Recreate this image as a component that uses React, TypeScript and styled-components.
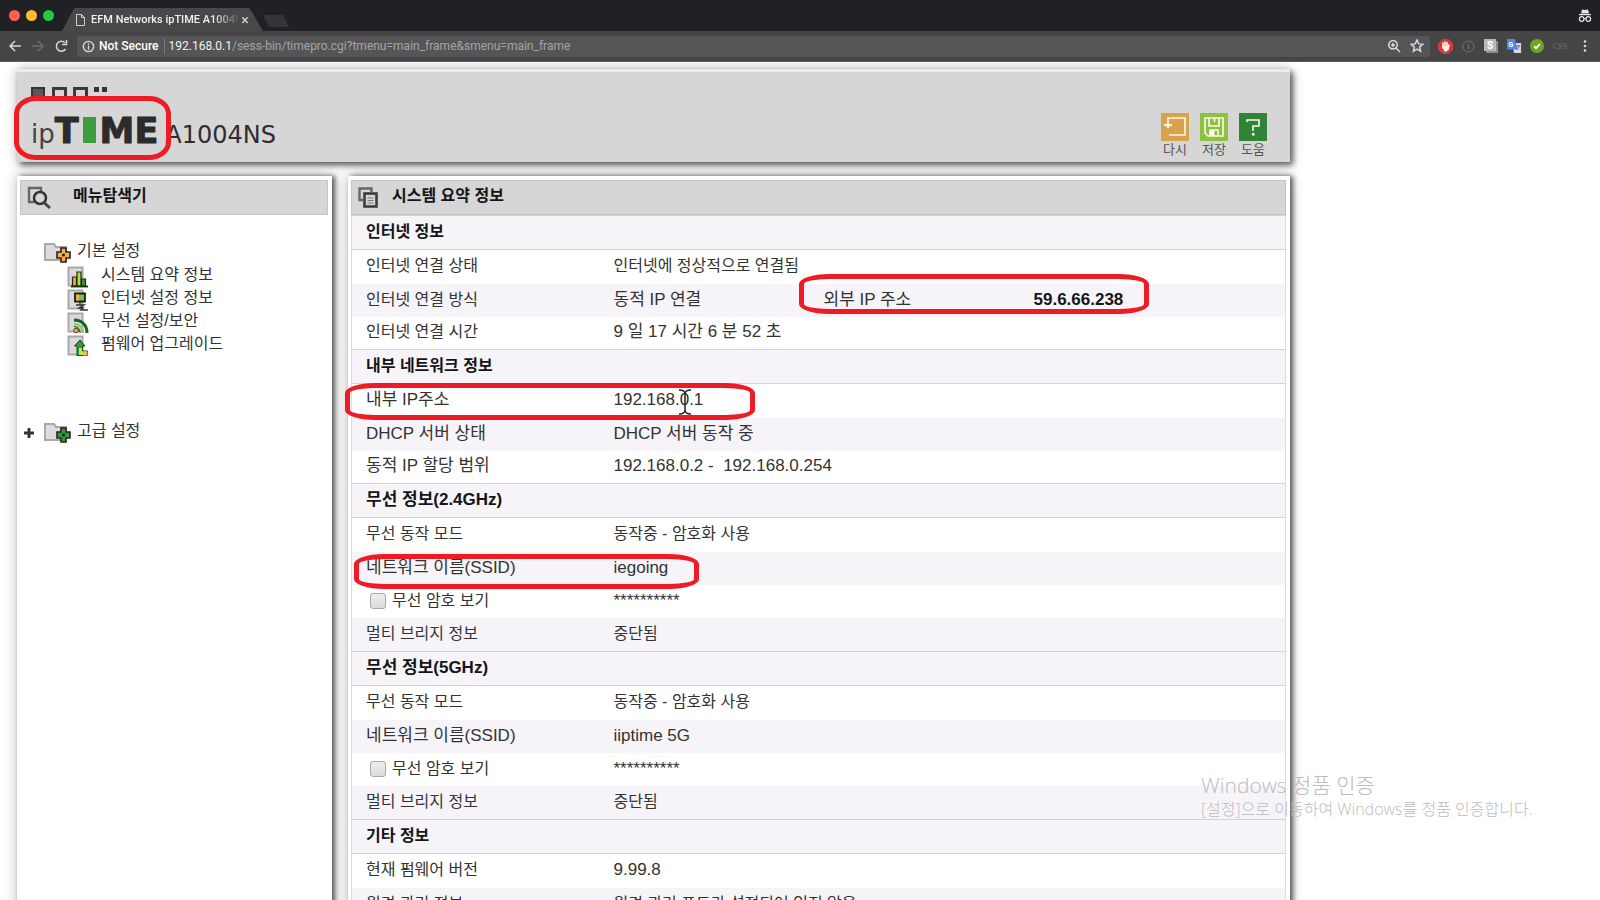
import React, { useState } from "react";
import styled, { createGlobalStyle } from "styled-components";

const GlobalStyle = createGlobalStyle`
  * { box-sizing: border-box; }
  body {
    margin: 0;
    background: #fff;
    color: #333;
    font-family: "Liberation Sans", "Noto Sans CJK KR", sans-serif;
    font-size: 16px;
  }
  button { border: 0; padding: 0; background: none; color: inherit; font: inherit; cursor: pointer; }
  a { color: inherit; text-decoration: none; }
  svg { display: block; flex: none; }
`;

/* ---------- browser window ---------- */

const Window = styled.div`
  height: 100vh;
  display: flex;
  flex-direction: column;
  overflow: hidden;
  position: relative;
`;

const TabStrip = styled.div`
  flex: none;
  height: 31px;
  display: flex;
  align-items: flex-end;
  padding: 0 8px 0 9px;
  background: #202125;
`;

const Lights = styled.div`
  align-self: center;
  display: flex;
  gap: 6px;
  margin-right: 8px;
`;

const Light = styled.button<{ $color: string }>`
  width: 11px;
  height: 11px;
  border-radius: 50%;
  background: ${(p) => p.$color};
`;

const Tab = styled.div`
  width: 201px;
  height: 23px;
  display: flex;
  align-items: center;
  padding: 0 13px 0 14px;
  background: #48484a;
  clip-path: polygon(0 100%, 10px 4px, 13px 0, 187px 0, 190px 4px, 100% 100%);
`;

const TabTitle = styled.span`
  flex: 1;
  min-width: 0;
  margin: 0 0 0 6px;
  overflow: hidden;
  white-space: nowrap;
  font: 500 11px/20px Roboto, sans-serif;
  color: #f0f0f0;
  mask-image: linear-gradient(to right, #000 82%, transparent);
`;

const CloseTab = styled.button`
  width: 10px;
  font: 14px/20px Roboto, sans-serif;
  color: #d6d6d6;
`;

const NewTab = styled.button`
  width: 26px;
  height: 12px;
  margin-bottom: 4px;
  background: #343437;
  clip-path: polygon(0 0, 20px 0, 100% 100%, 6px 100%);
`;

const Incognito = styled.div`
  margin: 0 0 8px auto;
`;

const Toolbar = styled.div`
  flex: none;
  height: 31px;
  display: flex;
  align-items: center;
  padding: 0 8px;
  background: #454447;
  border-bottom: 1px solid #5c5b5e;
  color: #d8d8d8;
`;

const NavButton = styled.button<{ $dim?: boolean }>`
  width: 14px;
  margin-right: 9px;
  color: ${(p) => (p.$dim ? "#6b6b6d" : "#d8d8d8")};
`;

const AddressBar = styled.div`
  flex: 1;
  height: 21px;
  display: flex;
  align-items: center;
  margin-right: 8px;
  padding: 0 6px 0 5px;
  border-radius: 2px;
  background: #555456;
`;

const Secure = styled.span`
  margin-left: 4px;
  padding-right: 5px;
  border-right: 1px solid #7b7b7d;
  font: 500 12px/16px Roboto, sans-serif;
  color: #fff;
`;

const Address = styled.input`
  width: 40px;
  flex: 1;
  padding: 0;
  border: 0;
  outline: 0;
  background: none;
  color: #eee;
  font: inherit;
`;

const UrlBox = styled.div`
  flex: 1;
  display: flex;
  align-items: center;
  margin-left: 4px;
  color: #a5a5a7;
  font: 12px/20px Roboto, sans-serif;
  b { font-weight: 400; color: #f2f2f2; }
`;

const BarIcons = styled.div`
  display: flex;
  align-items: center;
  gap: 9px;
`;

const Extensions = styled.div`
  display: flex;
  align-items: center;
  gap: 9px;
`;

/* ---------- router page ---------- */

const Page = styled.main`
  flex: 1;
  min-height: 0;
  overflow: hidden;
  padding: 7px 17px 0;
`;

const Shell = styled.div`
  position: relative;
  max-width: 1273px;
`;

const Banner = styled.header`
  height: 93px;
  display: flex;
  justify-content: space-between;
  padding: 15px 23px 0 14px;
  background: #d6d6d6;
  border-top: 3px solid #ececec;
  box-shadow: 3px 3px 6px rgba(0, 0, 0, 0.6), 0 0 12px rgba(0, 0, 0, 0.25);
`;

const Logo = styled.div`
  display: flex;
  flex-direction: column;
  gap: 13px;
`;

const Brand = styled.h1`
  height: 34px;
  display: flex;
  align-items: baseline;
  margin: 0;
  font: 26px/34px "DejaVu Sans", sans-serif;
  color: #444;
`;

const Heavy = styled.span`
  font-size: 35px;
  font-weight: 700;
  color: #2b2b2b;
  -webkit-text-stroke: 1px #2b2b2b;
`;

const GreenI = styled.span`
  align-self: flex-start;
  width: 13px;
  height: 26px;
  margin: 3px 4px 0;
  background: #3c9d3f;
  color: #3c9d3f;
  font: 700 20px/26px "DejaVu Sans", sans-serif;
  text-align: center;
`;

const Model = styled.span`
  margin-left: 7px;
  font-size: 24px;
  color: #2e2e2e;
`;

const Actions = styled.nav`
  display: flex;
  gap: 11px;
  padding-top: 26px;
`;

const Action = styled.button`
  width: 28px;
  display: flex;
  flex-direction: column;
  align-items: center;
  align-self: flex-start;
  gap: 1px;
  color: #555;
  font-size: 13px;
  line-height: 16px;
  white-space: nowrap;
`;

const Columns = styled.div`
  display: grid;
  grid-template-columns: 315px minmax(0, 1fr);
  gap: 16px;
  margin-top: 14px;
`;

const Panel = styled.section`
  position: relative;
  min-height: 760px;
  padding: 4px 4px 0 3px;
  background: #fff;
  box-shadow: 3px 0 5px rgba(0, 0, 0, 0.6), 0 0 14px rgba(0, 0, 0, 0.25);
`;

const PanelTitle = styled.h2<{ $gap: number }>`
  height: 35px;
  display: flex;
  align-items: center;
  gap: ${(p) => p.$gap}px;
  margin: 0;
  padding: 0 6px;
  background: #d6d6d6;
  border: 1px solid #c4c4c4;
  font-size: 16px;
  line-height: 24px;
  color: #151515;
  span { padding-bottom: 4px; }
`;

const Menu = styled.ul`
  list-style: none;
  margin: 0;
  padding: 26px 0 0;
`;

const MenuItem = styled.li<{ $level: number }>`
  height: ${(p) => (p.$level ? 23 : 24)}px;
  padding-left: ${(p) => (p.$level ? 47 : 4)}px;
`;

const MenuLink = styled.a<{ $gap: number }>`
  height: 23px;
  display: flex;
  align-items: center;
  gap: ${(p) => p.$gap}px;
  line-height: 22px;
  span { padding-bottom: 4px; }
`;

const Advanced = styled(Menu)`
  padding-top: 64px;
`;

const Toggle = styled.i`
  width: 10px;
  margin-right: 5px;
`;

const Info = styled.table`
  width: 100%;
  border-collapse: collapse;
  table-layout: fixed;
  border-left: 1px solid #ddd;
  border-right: 1px solid #ddd;
`;

const SectionHead = styled.th<{ $latin?: boolean }>`
  height: 34px;
  padding: 0 0 2px 14px;
  background: #f6f4f8;
  border-top: 1px solid #d4d4d6;
  border-bottom: 1px solid #d4d4d6;
  text-align: left;
  font-size: ${(p) => (p.$latin ? 17 : 16)}px;
  line-height: 22px;
  color: #151515;
`;

const Row = styled.tr`
  height: 33px;
  &:nth-child(2), &:nth-child(5) { height: 34px; }
  &:nth-child(odd) { background: #f6f4f8; }
`;

const Cell = styled.td<{ $latin?: boolean }>`
  padding: 0 0 1px 14px;
  text-align: left;
  font-size: ${(p) => (p.$latin ? 17 : 16)}px;
  font-weight: 400;
  line-height: 22px;
  white-space: pre;
  strong { color: #151515; }
`;

const Check = styled.label`
  display: flex;
  align-items: center;
  gap: 6px;
  padding-left: 4px;
`;

const Box = styled.input`
  appearance: none;
  width: 16px;
  height: 16px;
  margin: 0;
  border: 1px solid #a9a9a9;
  border-radius: 3px;
  background: linear-gradient(#eee, #dcdcdc);
  &:checked { background: #6a9be8; }
`;

/* Hand-drawn marker that circles a value on top of the page. */
const Mark = styled.div<{ $x: number; $y: number; $w: number; $h: number; $r: string }>`
  position: absolute;
  left: ${(p) => p.$x}px;
  top: ${(p) => p.$y}px;
  width: ${(p) => p.$w}px;
  height: ${(p) => p.$h}px;
  border: 5px solid #ed1c24;
  border-radius: ${(p) => p.$r};
  pointer-events: none;
`;

const TextCursor = styled.svg`
  position: absolute;
  left: 330px;
  top: 213px;
`;

const Watermark = styled.aside`
  position: absolute;
  right: 62px;
  bottom: 80px;
  width: 337px;
  color: #bcbcbc;
  font: 300 16px/22px "Open Sans", "Noto Sans CJK KR", sans-serif;
  white-space: nowrap;
  p { margin: 0; }
  p:first-child { font-size: 21px; line-height: 25px; }
`;

/* ---------- drawings ---------- */

const LogoSquares = () => (
  <svg width="76" height="14" viewBox="0 0 76 14">
    <rect x="1" y="1" width="12" height="12" fill="#59575a" stroke="#333" strokeWidth="2" />
    <rect x="22.5" y="1.5" width="12" height="11" fill="none" stroke="#3a3a3a" strokeWidth="3" />
    <rect x="43.5" y="1.5" width="12" height="11" fill="none" stroke="#3a3a3a" strokeWidth="3" />
    <path d="M63 0h5v5h-5zM71 0h5v5h-5zM63 9h5v5h-5zM71 9h5v5h-5z" fill="#333" />
  </svg>
);

const ActionIcon = ({ kind }: { kind: string }) => {
  const fill: Record<string, string> = { reload: "#d7a34c", save: "#8cc23f", help: "#2f8437" };
  return (
    <svg width="28" height="28" viewBox="0 0 28 28" fill="none" stroke="#fff8ee" strokeWidth="1.6">
      <rect width="28" height="28" fill={fill[kind]} stroke="none" />
      {kind === "reload" && (
        <>
          <path d="M7 12V5h17v17H8" />
          <path d="M3 11h8v2H9l-2 2.500L5 13H3z" fill="#fff8ee" stroke="none" />
        </>
      )}
      {kind === "save" && (
        <>
          <path d="M5 5h18v18H8l-3-3z" />
          <path d="M9 5v8h10V5M14.500 5v4M10 23v-6h8v6" />
          <path d="M10 17h4.500v6H10z" fill="#fff8ee" stroke="none" />
        </>
      )}
      {kind === "help" && (
        <>
          <path d="M8 9V7h12v6h-6v5" />
          <path d="M13 20h2.500v2.500H13z" fill="#fff8ee" stroke="none" />
        </>
      )}
    </svg>
  );
};

const SearchPage = () => (
  <svg width="24" height="24" viewBox="0 0 24 24" fill="none">
    <path d="M7 16H2V2h12v3" stroke="#666" strokeWidth="2.400" />
    <circle cx="13" cy="12" r="6" fill="#d6d6d6" stroke="#333" strokeWidth="2.600" />
    <path d="M17 16.500l6 5.500" stroke="#444" strokeWidth="3" />
  </svg>
);

const Sheets = () => (
  <svg width="20" height="21" viewBox="0 0 20 21" fill="none">
    <path d="M5 13H1.500V1.500h12V5" stroke="#666" strokeWidth="2.400" />
    <rect x="6.500" y="6.500" width="12" height="13" fill="#d6d6d6" stroke="#3d3d3d" strokeWidth="2.600" />
    <path d="M9.500 11h6M9.500 13.500h6M9.500 16h6" stroke="#777" />
  </svg>
);

const Folder = ({ color }: { color: string }) => (
  <svg width="28" height="22" viewBox="0 0 28 22">
    <path d="M1 2h9l2 3h10v13H1z" fill="#dcdcdc" stroke="#a8a8a8" strokeWidth="2" />
    <path
      d="M17 6h5v4h4v6h-4v4h-5v-4h-4v-6h4z"
      fill={color}
      stroke="#2c2412"
      strokeWidth="1.600"
    />
    <circle cx="19.500" cy="13" r="1.600" fill="#222" />
  </svg>
);

const ItemIcon = ({ kind }: { kind: string }) => (
  <svg width="22" height="22" viewBox="0 0 22 22" fill="none">
    <rect x="1.500" y="1.500" width="14" height="18" fill="#dadada" stroke="#a8a8a8" strokeWidth="2" />
    {kind === "chart" && (
      <g stroke="#1d2a10" strokeWidth="1.200">
        <path d="M5.500 11h4v9h-4z" fill="#e9a458" />
        <path d="M10 6h4v14h-4z" fill="#b5dd3d" />
        <path d="M14.500 13h4v7h-4z" fill="#2d9a3c" />
        <path d="M4 20.500h17" strokeWidth="1.800" />
      </g>
    )}
    {kind === "monitor" && (
      <>
        <path d="M8 4.500h10v8H8z" fill="#7ac143" stroke="#1b1b1b" strokeWidth="1.800" />
        <path d="M9 5.500h3v6H9z" fill="#e8b04a" />
        <path d="M13 13v3M9 16h8l-5 3h4l-2 2h7" stroke="#333" strokeWidth="1.400" />
      </>
    )}
    {kind === "wifi" && (
      <>
        <path d="M7 8c8 0 13 5 13 13" stroke="#1f5d2c" strokeWidth="3" />
        <path d="M7 12c5 0 9 4 9 9" stroke="#8fce62" strokeWidth="2.400" />
        <path d="M7 14.500c3.500 0 6 3 6 6" stroke="#27562c" strokeWidth="1.200" />
        <circle cx="9" cy="18.500" r="2.300" fill="#f0b060" stroke="#5a3c14" />
      </>
    )}
    {kind === "upgrade" && (
      <>
        <path d="M13 5l5 6h-2.500v5h5v4.500H10V11H7.500z" fill="#2f9a3e" stroke="#17401d" />
        <path d="M12 13h3v3.500h5v3.500h-8z" fill="#c9e24c" />
        <path d="M16 16.500h4.500v4H16z" fill="#f0b860" />
      </>
    )}
  </svg>
);

const Plus = () => (
  <svg width="10" height="10" viewBox="0 0 9 9">
    <path d="M4.500 0v9M0 4.500h9" stroke="#333" strokeWidth="2.600" />
  </svg>
);

const Stroke = ({ d, size = 14 }: { d: string; size?: number }) => (
  <svg width={size} height={size} viewBox="0 0 14 14" fill="none" stroke="currentColor" strokeWidth="1.500">
    <path d={d} />
  </svg>
);

/* ---------- data ---------- */

type Entry = { label: string; value: string; extra?: [string, string]; check?: boolean };

const sections: { title: string; rows: Entry[] }[] = [
  {
    title: "인터넷 정보",
    rows: [
      { label: "인터넷 연결 상태", value: "인터넷에 정상적으로 연결됨" },
      { label: "인터넷 연결 방식", value: "동적 IP 연결", extra: ["외부 IP 주소", "59.6.66.238"] },
      { label: "인터넷 연결 시간", value: "9 일 17 시간 6 분 52 초" },
    ],
  },
  {
    title: "내부 네트워크 정보",
    rows: [
      { label: "내부 IP주소", value: "192.168.0.1" },
      { label: "DHCP 서버 상태", value: "DHCP 서버 동작 중" },
      { label: "동적 IP 할당 범위", value: "192.168.0.2 -  192.168.0.254" },
    ],
  },
  {
    title: "무선 정보(2.4GHz)",
    rows: [
      { label: "무선 동작 모드", value: "동작중 - 암호화 사용" },
      { label: "네트워크 이름(SSID)", value: "iegoing" },
      { label: "무선 암호 보기", value: "**********", check: true },
      { label: "멀티 브리지 정보", value: "중단됨" },
    ],
  },
  {
    title: "무선 정보(5GHz)",
    rows: [
      { label: "무선 동작 모드", value: "동작중 - 암호화 사용" },
      { label: "네트워크 이름(SSID)", value: "iiptime 5G" },
      { label: "무선 암호 보기", value: "**********", check: true },
      { label: "멀티 브리지 정보", value: "중단됨" },
    ],
  },
  {
    title: "기타 정보",
    rows: [
      { label: "현재 펌웨어 버전", value: "9.99.8" },
      { label: "원격 관리 정보", value: "원격 관리 포트가 설정되어 있지 않음" },
    ],
  },
];

const menu = [
  { kind: "chart", text: "시스템 요약 정보" },
  { kind: "monitor", text: "인터넷 설정 정보" },
  { kind: "wifi", text: "무선 설정/보안" },
  { kind: "upgrade", text: "펌웨어 업그레이드" },
];

const actions = [
  { kind: "reload", text: "다시" },
  { kind: "save", text: "저장" },
  { kind: "help", text: "도움" },
];

const hasLatin = (text: string) => /[A-Za-z0-9*]/.test(text);

const Browser = () => (
  <>
    <TabStrip>
      <Lights>
        <Light $color="#ff5f57" aria-label="Close" />
        <Light $color="#ffbd2e" aria-label="Minimize" />
        <Light $color="#28c940" aria-label="Zoom" />
      </Lights>
      <Tab>
        <svg width="9" height="12" viewBox="0 0 9 12" fill="none" stroke="#cfcfcf">
          <path d="M.5.5H5.500l3 3v8h-8zM5.500.5v3h3" />
        </svg>
        <TabTitle>EFM Networks ipTIME A1004N</TabTitle>
        <CloseTab aria-label="Close tab">×</CloseTab>
      </Tab>
      <NewTab aria-label="New tab" />
      <Incognito>
        <svg width="14" height="15" viewBox="0 0 14 15" fill="none" stroke="#e4e4e4">
          <path d="M4 1.500l3 .6 3-.6 1 4H3zM1 6h12v1.300H1z" fill="#e4e4e4" stroke="none" />
          <circle cx="3.700" cy="11" r="2.300" strokeWidth="1.200" />
          <circle cx="10.300" cy="11" r="2.300" strokeWidth="1.200" />
          <path d="M6 10.500h2" />
        </svg>
      </Incognito>
    </TabStrip>
    <Toolbar>
      <NavButton aria-label="Back"><Stroke d="M13 7H2M7 2L2 7l5 5" /></NavButton>
      <NavButton $dim aria-label="Forward"><Stroke d="M1 7h11M7 2l5 5-5 5" /></NavButton>
      <NavButton aria-label="Reload"><Stroke d="M11.500 10A5 5 0 1 1 11 3.700M12.500 1v4.500H8" /></NavButton>
      <AddressBar>
        <Stroke size={13} d="M7 1.500a5.500 5.500 0 1 0 .01 0M7 6v4.500M7 3.500V5" />
        <Secure>Not Secure</Secure>
        <UrlBox>
          <b>192.168.0.1</b>/sess-bin/timepro.cgi?tmenu=main_frame&amp;smenu=main_frame
          <Address aria-label="Address" />
        </UrlBox>
        <BarIcons>
          <Stroke d="M6 1.500a4.300 4.300 0 1 0 .01 0M9 9l4 4M4 6h4M6 4v4" />
          <Stroke d="M7 1l1.700 3.900 4.100.4-3.100 2.800.9 4.200L7 10.200l-3.600 2.100.9-4.200L1.200 5.300l4.100-.4z" />
        </BarIcons>
      </AddressBar>
      <Extensions>
        <svg width="15" height="15" viewBox="0 0 15 15">
          <path d="M4.500 0h6L15 4.500v6L10.500 15h-6L0 10.500v-6z" fill="#d93a33" />
          <path d="M5 4v5M7 3v6M9 3.500V9M11 6l-1 4" stroke="#fff" strokeWidth="1.500" strokeLinecap="round" />
          <path d="M4.300 7.500h6v3L8.500 12.500h-2z" fill="#fff" />
        </svg>
        <svg width="13" height="13" viewBox="0 0 13 13" fill="none" stroke="#737375">
          <circle cx="6.500" cy="6.500" r="5.500" />
          <path d="M6.500 5.500v4M6.500 3.500v1" strokeWidth="1.500" />
        </svg>
        <svg width="14" height="14" viewBox="0 0 14 14">
          <path d="M2 2h12v12H2z" fill="#8d8d8d" />
          <path d="M0 0h12v12H0z" fill="#b9b9b9" />
          <text x="3" y="10" fontSize="10" fontWeight="700" fontFamily="Roboto, sans-serif" fill="#fff">S</text>
        </svg>
        <svg width="14" height="14" viewBox="0 0 14 14">
          <path d="M5 4h9v10H7z" fill="#d4d8de" />
          <path d="M0 0h8l2.500 10.500H0z" fill="#4a88ea" />
          <text x="1.500" y="8" fontSize="7" fontWeight="700" fontFamily="Roboto, sans-serif" fill="#fff">G</text>
          <path d="M9 7h4M11 6v1M9.500 11l3-4" stroke="#6d7680" />
        </svg>
        <svg width="14" height="14" viewBox="0 0 14 14" fill="none">
          <circle cx="7" cy="7" r="7" fill="#6fa51d" />
          <path d="M4 7.200l2 2L10 5" stroke="#fff" strokeWidth="1.700" />
        </svg>
        <svg width="14" height="14" viewBox="0 0 14 14">
          <text x="0" y="10" fontSize="8" fontFamily="Liberation Serif, serif" fill="#727274">CSS</text>
        </svg>
        <svg width="16" height="14" viewBox="0 0 16 14" fill="#d8d8d8">
          <circle cx="9" cy="2.500" r="1.300" />
          <circle cx="9" cy="7" r="1.300" />
          <circle cx="9" cy="11.500" r="1.300" />
        </svg>
      </Extensions>
    </Toolbar>
  </>
);

const InfoRow = ({ entry, id }: { entry: Entry; id: string }) => {
  const [shown, setShown] = useState(false);
  return (
    <Row>
      <Cell as="th" scope="row" $latin={hasLatin(entry.label)}>
        {entry.check ? (
          <Check htmlFor={id}>
            <Box id={id} type="checkbox" checked={shown} onChange={() => setShown(!shown)} />
            {entry.label}
          </Check>
        ) : (
          entry.label
        )}
      </Cell>
      <Cell colSpan={entry.extra ? 1 : 3} $latin={hasLatin(entry.value)}>{entry.value}</Cell>
      {entry.extra && (
        <>
          <Cell as="th" scope="row" $latin>{entry.extra[0]}</Cell>
          <Cell $latin><strong>{entry.extra[1]}</strong></Cell>
        </>
      )}
    </Row>
  );
};

export default function App() {
  return (
    <Window>
      <GlobalStyle />
      <Browser />
      <Page>
        <Shell>
          <Banner>
            <Logo>
              <LogoSquares />
              <Brand>
                ip<Heavy>T</Heavy><GreenI>I</GreenI><Heavy>ME</Heavy>
                <Model>A1004NS</Model>
              </Brand>
            </Logo>
            <Actions>
              {actions.map((a) => (
                <Action key={a.kind}>
                  <ActionIcon kind={a.kind} />
                  {a.text}
                </Action>
              ))}
            </Actions>
          </Banner>
          <Mark $x={-3} $y={27} $w={157} $h={64} $r="22px / 18px" />
          <Columns>
            <Panel>
              <PanelTitle $gap={22}><SearchPage /><span>메뉴탐색기</span></PanelTitle>
              <Menu>
                <MenuItem $level={0}>
                  <MenuLink href="#basic" $gap={5}>
                    <Toggle /><Folder color="#efb04c" /><span>기본 설정</span>
                  </MenuLink>
                </MenuItem>
                {menu.map((m) => (
                  <MenuItem key={m.kind} $level={1}>
                    <MenuLink href={"#" + m.kind} $gap={12}>
                      <ItemIcon kind={m.kind} /><span>{m.text}</span>
                    </MenuLink>
                  </MenuItem>
                ))}
              </Menu>
              <Advanced>
                <MenuItem $level={0}>
                  <MenuLink href="#advanced" $gap={5}>
                    <Toggle><Plus /></Toggle><Folder color="#2f9a3e" /><span>고급 설정</span>
                  </MenuLink>
                </MenuItem>
              </Advanced>
            </Panel>
            <Panel>
              <PanelTitle $gap={14}><Sheets /><span>시스템 요약 정보</span></PanelTitle>
              <Info>
                <colgroup>
                  <col style={{ width: 248 }} />
                  <col style={{ width: 210 }} />
                  <col style={{ width: 210 }} />
                  <col />
                </colgroup>
                {sections.map((s, i) => (
                  <tbody key={s.title}>
                    <tr>
                      <SectionHead colSpan={4} scope="rowgroup" $latin={hasLatin(s.title)}>{s.title}</SectionHead>
                    </tr>
                    {s.rows.map((r, j) => (
                      <InfoRow key={r.label} entry={r} id={`view-${i}-${j}`} />
                    ))}
                  </tbody>
                ))}
              </Info>
              <Mark $x={451} $y={98} $w={350} $h={40} $r="30px / 10px" />
              <Mark $x={-3} $y={207} $w={410} $h={37} $r="30px / 10px" />
              <Mark $x={6} $y={378} $w={345} $h={35} $r="30px / 10px" />
              <TextCursor width="14" height="26" viewBox="0 0 14 26" fill="none" stroke="#222" strokeWidth="1.500">
                <path d="M1 1q6 0 6 4v16q0 4-6 4M13 1q-6 0-6 4v16q0 4 6 4" />
              </TextCursor>
            </Panel>
          </Columns>
        </Shell>
      </Page>
      <Watermark>
        <p>Windows 정품 인증</p>
        <p>[설정]으로 이동하여 Windows를 정품 인증합니다.</p>
      </Watermark>
    </Window>
  );
}
